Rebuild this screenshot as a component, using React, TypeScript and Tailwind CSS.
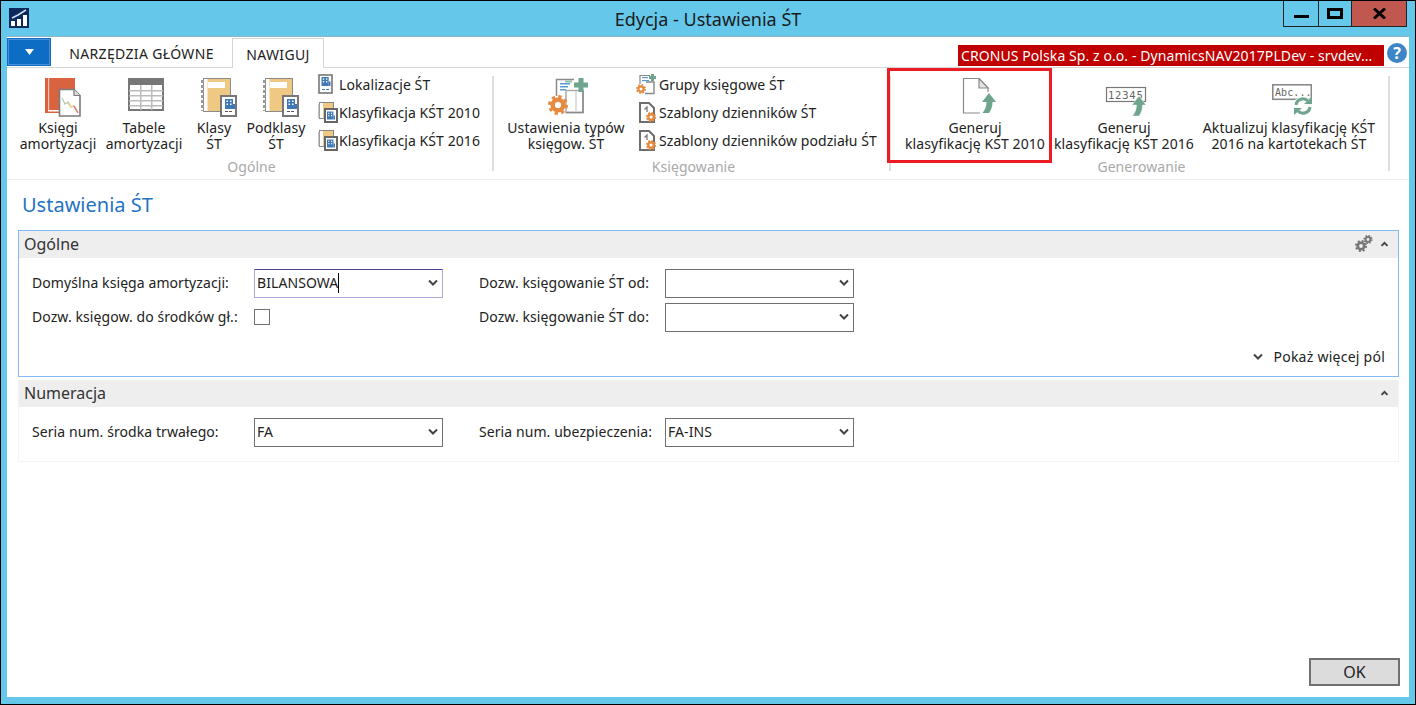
import React from "react";

const Chevron = ({ up = false, small = false }: { up?: boolean; small?: boolean }) => (
  <svg width={small ? 9 : 12} height={small ? 6 : 8} viewBox="0 0 12 8">
    <polyline points={up ? "2,6.5 6,2.5 10,6.5" : "2,1.5 6,5.5 10,1.5"} fill="none" stroke="#444" strokeWidth={small ? 2.6 : 2} />
  </svg>
);

const Building = ({ x, y, s = 1 }: { x: number; y: number; s?: number }) => (
  <g transform={`translate(${x} ${y}) scale(${s})`}>
    <rect x="0" y="0" width="8" height="10" fill="#3f78b5" />
    <rect x="1.5" y="1.5" width="1.5" height="1.5" fill="#fff" />
    <rect x="5" y="1.5" width="1.5" height="1.5" fill="#fff" />
    <rect x="1.5" y="4.5" width="1.5" height="1.5" fill="#fff" />
    <rect x="5" y="4.5" width="1.5" height="1.5" fill="#fff" />
    <rect x="8" y="5" width="2" height="5" fill="#3f78b5" />
  </g>
);

const BookIcon = () => (
  <svg width="36" height="39" viewBox="0 0 36 39" className="ml-[9px]">
    <rect x="0" y="0" width="30" height="35" fill="#d9623f" />
    <rect x="3" y="0" width="1.2" height="32" fill="#f3c4b2" />
    <rect x="3" y="32" width="11" height="1.5" fill="#fff" />
    <path d="M14.5 11.5H29l6 6v20.5H14.5Z" fill="#fff" stroke="#7b7b7b" strokeWidth="1.6" />
    <path d="M29 11.5v6h6" fill="#ddd" stroke="#7b7b7b" strokeWidth="1.2" />
    <polyline points="17,20 20,26 23,24 26,29 29,28 32,34" fill="none" stroke="#a9cdbb" strokeWidth="1.3" />
    <polyline points="22,24 26,29 29,28" fill="none" stroke="#eecb82" strokeWidth="1.3" />
    <polyline points="29,28 33,35" fill="none" stroke="#dd7a60" strokeWidth="1.5" />
  </svg>
);

const TableIcon = () => (
  <svg width="36" height="34" viewBox="0 0 36 34" className="ml-[3px]">
    <rect x="1" y="1" width="34" height="31" fill="#fff" stroke="#777" strokeWidth="2" />
    <rect x="0" y="0" width="36" height="7" fill="#777" />
    {[12, 17, 22, 27].map((y) => (
      <rect key={y} x="1" y={y} width="34" height="1.5" fill="#bcbcbc" />
    ))}
    <rect x="12" y="7" width="1.5" height="25" fill="#bcbcbc" />
    <rect x="23" y="7" width="1.5" height="25" fill="#bcbcbc" />
  </svg>
);

const NotebookIcon = () => (
  <svg width="36" height="39" viewBox="0 0 36 39" className="ml-[9px]">
    <rect x="2.5" y="0.5" width="27" height="33" fill="#efc983" stroke="#8a8a8a" />
    <rect x="3" y="1" width="3.5" height="32" fill="#fff" />
    <line x1="1.5" y1="2" x2="1.5" y2="33" stroke="#999" strokeWidth="3" strokeDasharray="3 2" />
    <rect x="7" y="4" width="17" height="6" fill="#fff" />
    <rect x="20" y="18" width="15" height="20" fill="#fff" stroke="#777" strokeWidth="2" />
    <Building x={24} y={21} />
    <rect x="24" y="33" width="3" height="1" fill="#555" />
    <rect x="28" y="33" width="3" height="1" fill="#555" />
  </svg>
);

const SmallDocIcon = () => (
  <svg width="15" height="20" viewBox="0 0 15 20">
    <rect x="1" y="1" width="13" height="18" fill="#fff" stroke="#777" strokeWidth="1.6" />
    <Building x={3.5} y={3} s={0.9} />
    <rect x="4" y="15" width="3" height="1" fill="#3f78b5" />
    <rect x="8" y="15" width="3" height="1" fill="#3f78b5" />
  </svg>
);

const SmallClassIcon = () => (
  <svg width="20" height="21" viewBox="0 0 20 21">
    <rect x="1.5" y="0.5" width="14" height="16" fill="#efc983" stroke="#888" />
    <rect x="2" y="1" width="3" height="15" fill="#fff" />
    <rect x="0.3" y="2" width="1.4" height="14" fill="#aaa" />
    <rect x="7" y="7" width="12" height="13" fill="#fff" stroke="#666" strokeWidth="2" />
    <Building x={9} y={9.5} s={0.8} />
  </svg>
);

const Gear = ({ cx, cy, r, color }: { cx: number; cy: number; r: number; color: string }) => {
  const outer = r * 1.25;
  const c = 2 * Math.PI * outer;
  return (
    <g>
      <circle cx={cx} cy={cy} r={r * 0.72} fill="none" stroke={color} strokeWidth={r * 0.6} />
      <circle cx={cx} cy={cy} r={outer * 0.86} fill="none" stroke={color} strokeWidth={r * 0.55} strokeDasharray={`${(c * 0.86) / 16} ${(c * 0.86) / 16}`} />
    </g>
  );
};

const TypesIcon = () => (
  <svg width="42" height="40" viewBox="0 0 42 40" className="ml-[5px]">
    <path d="M8.500 18V1.500H26" fill="none" stroke="#8a8a8a" strokeWidth="1.5" />
    <rect x="17" y="2.500" width="7" height="2" fill="#8fc0ac" />
    <rect x="12" y="5" width="10" height="1.500" fill="#5b9bd0" />
    <rect x="12" y="8" width="8" height="1.500" fill="#5b9bd0" />
    <rect x="12" y="11" width="6" height="1.500" fill="#5b9bd0" />
    <rect x="18" y="12.500" width="17" height="22" fill="#fff" stroke="#aaa" strokeWidth="1.5" />
    <path d="M28 13V33" stroke="#c8c8c8" strokeWidth="1.200" />
    <path d="M35 12.500V34.500H18" fill="none" stroke="#8a8a8a" strokeWidth="1.500" />
    <rect x="26" y="4.500" width="14" height="5" fill="#6fa58e" />
    <rect x="30.500" y="0" width="5" height="14" fill="#6fa58e" />
    <Gear cx={10} cy={27} r={7.400} color="#e58a3f" />
  </svg>
);

const GroupsIcon = () => (
  <svg width="21" height="21" viewBox="0 0 21 21">
    <path d="M4 10V1.500H14" fill="none" stroke="#888" strokeWidth="1.200" />
    <rect x="6" y="3" width="6" height="1.200" fill="#5b9bd0" />
    <rect x="6" y="6" width="7" height="1.200" fill="#5b9bd0" />
    <path d="M10 8H18V19.500H9" fill="#fff" stroke="#888" strokeWidth="1.400" />
    <rect x="13" y="2" width="7" height="3" fill="#6fa58e" />
    <rect x="15" y="0" width="3" height="7" fill="#6fa58e" />
    <Gear cx={5} cy={15} r={3.700} color="#e58a3f" />
  </svg>
);

const TemplateIcon = () => (
  <svg width="18" height="21" viewBox="0 0 18 21" className="ml-[3px]">
    <path d="M1 1h9l5 5v14H1Z" fill="#fff" stroke="#6e6e6e" strokeWidth="2" />
    <path d="M8 10V5l-2.500 2.500" fill="none" stroke="#777" strokeWidth="1.300" />
    <Gear cx={12} cy={15} r={3.800} color="#e58a3f" />
  </svg>
);

const ArrowPath = "M7 0L14 9H10.500C10.500 14 9 17 7 20H0.500C3 17 4.500 13 4.500 9H0Z";

const GenerateDocIcon = () => (
  <svg width="44" height="36" viewBox="0 0 44 36">
    <path d="M27 35H10.500V0.500H26L35 10V14" fill="none" stroke="#8a8a8a" strokeWidth="1.200" />
    <path d="M26 0.500V10H35Z" fill="#e4e4e4" stroke="#8a8a8a" strokeWidth="1.200" />
    <path d={ArrowPath} transform="translate(29 15)" fill="#6fa58e" />
  </svg>
);

const Gen2016Icon = () => (
  <svg width="46" height="39" viewBox="0 0 46 39">
    <rect x="5.500" y="9.500" width="39" height="14" fill="#fff" stroke="#777" strokeWidth="1.200" />
    <text x="7" y="20.500" fontFamily="'DejaVu Sans Mono', monospace" fontSize="10.500" letterSpacing="0.800" fill="#666">12345</text>
    <path d={ArrowPath} transform="translate(31 18)" fill="#6fa58e" stroke="#fff" strokeWidth="0.400" />
  </svg>
);

const AbcIcon = () => (
  <svg width="46" height="38" viewBox="0 0 46 38">
    <rect x="6.800" y="6.800" width="38.500" height="14.500" fill="#fff" stroke="#8a8a8a" strokeWidth="1.600" />
    <text x="9" y="17.500" fontFamily="'DejaVu Sans Mono', monospace" fontSize="10" fill="#666">Abc...</text>
    <circle cx="37" cy="28" r="9.500" fill="#fff" />
    <path d="M30 27a7 7 0 0 1 12-4" fill="none" stroke="#6fa58e" strokeWidth="3" />
    <path d="M44 29a7 7 0 0 1-12 4" fill="none" stroke="#6fa58e" strokeWidth="3" />
    <path d="M38 26h8v-7Z" fill="#6fa58e" />
    <path d="M36 30h-8v7Z" fill="#6fa58e" />
  </svg>
);

const GearsSmall = () => (
  <svg width="18" height="18" viewBox="0 0 18 18">
    <Gear cx={6} cy={11} r={4.500} color="#777" />
    <Gear cx={13} cy={4.500} r={3.400} color="#777" />
  </svg>
);

const Big = ({ icon, lines, w, ml = 0 }: { icon: React.ReactNode; lines: string[]; w: string; ml?: number }) => (
  <div className={`flex flex-col items-center ${w}`} style={ml ? { marginLeft: ml } : undefined}>
    <div className="flex h-[44px] w-full items-start justify-center pt-[2px]">{icon}</div>
    {lines.map((l) => (
      <div key={l} className="h-[16px] whitespace-nowrap text-center leading-[16px]">{l}</div>
    ))}
  </div>
);

const Small = ({ icon, label, slot }: { icon: React.ReactNode; label: string; slot: string }) => (
  <div className="flex h-[28px] items-center whitespace-nowrap">
    <div className={`flex justify-start ${slot}`}>{icon}</div>
    <span>{label}</span>
  </div>
);

const Combo = ({ value = "", focus = false }: { value?: string; focus?: boolean }) => (
  <div
    className={
      focus
        ? "flex h-[29px] w-[189px] items-center justify-between rounded-[1px] border border-[#a9a6dc] border-t-[#4c4592] pl-[2px] pr-[3px]"
        : "flex h-[29px] w-[189px] items-center justify-between border border-[#707070] pl-[2px] pr-[3px]"
    }
  >
    <div className="flex items-center">
      <span className="leading-[18px]">{value}</span>
      {focus && <span className="h-[20px] w-px bg-black" />}
    </div>
    <Chevron />
  </div>
);

const FieldRow = ({ children }: { children: React.ReactNode }) => (
  <div className="flex h-[34px] items-center pl-[13px]">{children}</div>
);

const Label = ({ w, ml = false, children }: { w: string; ml?: boolean; children: React.ReactNode }) => (
  <span className={`pb-[2px] ${w} ${ml ? "ml-[36px]" : ""}`}>{children}</span>
);

const GroupLabel = ({ children }: { children: React.ReactNode }) => (
  <div className="mt-[6px] pl-[4px] text-center leading-[16px] text-[#a9a9a9]">{children}</div>
);

export default function App() {
  return (
    <div className="flex h-[705px] w-[1416px] flex-col overflow-hidden border border-black bg-[#65c8ea] font-['Noto_Sans','Open_Sans',sans-serif] text-[14px] tracking-[0.08px] text-[#222]">
      <div className="grid h-[35px] shrink-0 grid-cols-[1fr_auto_1fr]">
        <div className="pl-[8px] pt-[7px]">
          <svg width="20" height="20" viewBox="0 0 20 20" className="bg-[#0c2a5c]">
            <rect x="2" y="13" width="4" height="5" fill="#fff" />
            <rect x="8" y="11" width="4" height="7" fill="#fff" />
            <rect x="14" y="7" width="4" height="11" fill="#fff" />
            <polyline points="3,10 9,7 17,2" fill="none" stroke="#cfe0f2" strokeWidth="1.5" />
          </svg>
        </div>
        <div className="pt-[8px] text-[18px] leading-[20px] tracking-normal text-[#1a1a1a]">Edycja - Ustawienia ŚT</div>
        <div className="flex justify-end pr-[8px]">
          <div className="flex h-[26px] items-start border-x border-b border-[#222]">
            <div className="flex h-full w-[35px] items-center justify-center border-r border-[#222]">
              <div className="mt-[6px] h-[3px] w-[15px] bg-black" />
            </div>
            <div className="flex h-full w-[33px] items-center justify-center border-r border-[#222]">
              <div className="h-[11px] w-[16px] border-[3px] border-black" />
            </div>
            <div className="flex h-full w-[54px] items-center justify-center bg-[#c0584f]">
              <svg width="13" height="11" viewBox="0 0 13 11">
                <path d="M1 0.500L12 10.500M12 0.500L1 10.500" stroke="#000" strokeWidth="3" />
              </svg>
            </div>
          </div>
        </div>
      </div>

      <div className="relative mx-[6px] mb-[7px] flex min-h-0 flex-1 flex-col border-t border-[#8fb4c4] bg-white">
        <div className="flex h-[31px] shrink-0 items-end border-b border-[#d5d5d5] pr-[2px]">
          <div className="mb-[1px] flex h-[28px] w-[44px] items-center justify-center bg-[#0d6cc4] shadow-[inset_0_0_0_1px_#0d6cc4,inset_0_0_0_2px_#4a90d8]">
            <svg width="9" height="6" viewBox="0 0 9 6"><path d="M0 0H9L4.500 6Z" fill="#fff" /></svg>
          </div>
          <div className="flex h-[29px] w-[181px] items-center justify-center pt-[2px] text-[14px] tracking-[0.35px]">NARZĘDZIA GŁÓWNE</div>
          <div className="relative top-px flex h-[30px] w-[92px] items-center justify-center border-x border-t border-[#d5d5d5] bg-white pt-[2px] tracking-[0.35px]">NAWIGUJ</div>
          <div className="mb-[1px] ml-auto flex h-[21px] items-center bg-[#c00000] px-[3px] text-white">
            <span className="w-[420px] overflow-hidden whitespace-nowrap">CRONUS Polska Sp. z o.o. - DynamicsNAV2017PLDev - srvdev...</span>
          </div>
          <div className="mb-[4px] ml-[3px] flex h-[20px] w-[20px] items-center justify-center rounded-full bg-[#3d85c6] text-[16px] font-bold leading-none text-white">?</div>
        </div>

        <div className="flex h-[112px] shrink-0 items-start border-b border-[#eeeeee] pt-[8px]">
          <div className="flex w-[485px] shrink-0 flex-col">
            <div className="flex h-[77px] items-start pl-[9px]">
              <Big icon={<BookIcon />} lines={["Księgi", "amortyzacji"]} w="w-[84px]" />
              <Big icon={<TableIcon />} lines={["Tabele", "amortyzacji"]} w="w-[84px]" ml={2} />
              <Big icon={<NotebookIcon />} lines={["Klasy", "ŚT"]} w="w-[48px]" ml={4} />
              <Big icon={<NotebookIcon />} lines={["Podklasy", "ŚT"]} w="w-[68px]" ml={4} />
              <div className="ml-[8px] mt-[-6px] flex flex-col">
                <Small slot="w-[21px]" icon={<SmallDocIcon />} label="Lokalizacje ŚT" />
                <Small slot="w-[21px]" icon={<SmallClassIcon />} label="Klasyfikacja KŚT 2010" />
                <Small slot="w-[21px]" icon={<SmallClassIcon />} label="Klasyfikacja KŚT 2016" />
              </div>
            </div>
            <GroupLabel>Ogólne</GroupLabel>
          </div>
          <div className="h-[95px] w-[2px] shrink-0 bg-[#dedede]" />
          <div className="flex w-[395px] shrink-0 flex-col">
            <div className="flex h-[77px] items-start pl-[7px]">
              <Big icon={<TypesIcon />} lines={["Ustawienia typów", "księgow. ŚT"]} w="w-[130px]" />
              <div className="ml-[5px] mt-[-6px] flex flex-col">
                <Small slot="w-[23px]" icon={<GroupsIcon />} label="Grupy księgowe ŚT" />
                <Small slot="w-[23px]" icon={<TemplateIcon />} label="Szablony dzienników ŚT" />
                <Small slot="w-[23px]" icon={<TemplateIcon />} label="Szablony dzienników podziału ŚT" />
              </div>
            </div>
            <GroupLabel>Księgowanie</GroupLabel>
          </div>
          <div className="h-[95px] w-[2px] shrink-0 bg-[#dedede]" />
          <div className="flex w-[497px] shrink-0 flex-col">
            <div className="flex h-[77px] items-start pl-[9px]">
              <Big icon={<GenerateDocIcon />} lines={["Generuj", "klasyfikację KŚT 2010"]} w="w-[150px]" />
              <Big icon={<Gen2016Icon />} lines={["Generuj", "klasyfikację KŚT 2016"]} w="w-[148px]" />
              <Big icon={<AbcIcon />} lines={["Aktualizuj klasyfikację KŚT", "2016 na kartotekach ŚT"]} w="w-[182px]" />
            </div>
            <GroupLabel>Generowanie</GroupLabel>
          </div>
          <div className="h-[95px] w-[2px] shrink-0 bg-[#dedede]" />
        </div>

        <div className="absolute left-[880px] top-[31px] h-[95px] w-[165px] border-[3px] border-[#ed1c24]" />

        <div className="flex min-h-0 flex-1 flex-col px-[11px]">
          <div className="h-[50px] shrink-0 pl-[4px] pt-[11px] text-[20px] leading-[28px] tracking-normal text-[#1f73c4]">Ustawienia ŚT</div>

          <div className="h-[147px] w-[1381px] shrink-0 border border-[#85b9f5]">
            <div className="flex h-[27px] items-center justify-between bg-[#eeeeee] pb-[2px] pl-[5px] pr-[9px] text-[16px] tracking-normal text-[#333]">
              <span>Ogólne</span>
              <div className="flex items-center gap-[7px]">
                <GearsSmall />
                <Chevron up small />
              </div>
            </div>
            <div className="pt-[8px]">
              <FieldRow>
                <Label w="w-[222px]">Domyślna księga amortyzacji:</Label>
                <Combo value="BILANSOWA" focus />
                <Label w="w-[186px]" ml>Dozw. księgowanie ŚT od:</Label>
                <Combo />
              </FieldRow>
              <FieldRow>
                <Label w="w-[222px]">Dozw. księgow. do środków gł.:</Label>
                <div className="w-[189px]"><div className="h-[16px] w-[16px] border border-[#707070]" /></div>
                <Label w="w-[186px]" ml>Dozw. księgowanie ŚT do:</Label>
                <Combo />
              </FieldRow>
            </div>
            <div className="mt-[12px] flex items-center justify-end gap-[9px] pr-[13px]">
              <Chevron />
              <span className="tracking-[0.25px]">Pokaż więcej pól</span>
            </div>
          </div>

          <div className="mt-[3px] h-[82px] w-[1381px] shrink-0 border border-t-0 border-[#f0f3f8]">
            <div className="flex h-[27px] items-center justify-between bg-[#eeeeee] pb-[2px] pl-[5px] pr-[9px] text-[16px] tracking-normal text-[#333]">
              <span>Numeracja</span>
              <Chevron up small />
            </div>
            <div className="pt-[8px]">
              <FieldRow>
                <Label w="w-[222px]">Seria num. środka trwałego:</Label>
                <Combo value="FA" />
                <Label w="w-[186px]" ml>Seria num. ubezpieczenia:</Label>
                <Combo value="FA-INS" />
              </FieldRow>
            </div>
          </div>

          <div className="mb-[11px] mr-[-2px] mt-auto flex justify-end">
            <div className="flex h-[28px] w-[91px] items-center justify-center border-2 border-[#707070] bg-[#dcdcdc] text-[16px]">OK</div>
          </div>
        </div>
      </div>
    </div>
  );
}
